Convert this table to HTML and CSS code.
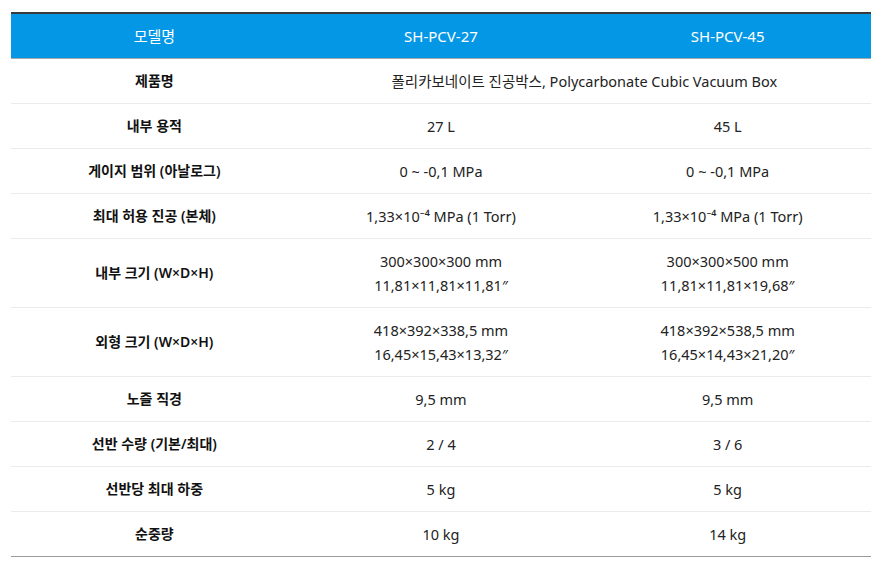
FILE: index.html
```html
<!DOCTYPE html>
<html lang="ko">
<head>
<meta charset="utf-8">
<title>Spec</title>
<link rel="stylesheet" href="styles.css">
</head>
<body>
<table class="spec">
  <colgroup><col class="c1"><col class="c2"><col class="c3"></colgroup>
  <thead>
    <tr><th>모델명</th><th>SH-PCV-27</th><th>SH-PCV-45</th></tr>
  </thead>
  <tbody>
    <tr><td class="lbl">제품명</td><td colspan="2">폴리카보네이트 진공박스, Polycarbonate Cubic Vacuum Box</td></tr>
    <tr><td class="lbl">내부 용적</td><td>27 L</td><td>45 L</td></tr>
    <tr><td class="lbl">게이지 범위 (아날로그)</td><td>0 ~ -0,1 MPa</td><td>0 ~ -0,1 MPa</td></tr>
    <tr><td class="lbl">최대 허용 진공 (본체)</td><td>1,33×10⁻⁴ MPa (1 Torr)</td><td>1,33×10⁻⁴ MPa (1 Torr)</td></tr>
    <tr><td class="lbl">내부 크기 (W×D×H)</td><td>300×300×300 mm<br>11,81×11,81×11,81″</td><td>300×300×500 mm<br>11,81×11,81×19,68″</td></tr>
    <tr><td class="lbl">외형 크기 (W×D×H)</td><td>418×392×338,5 mm<br>16,45×15,43×13,32″</td><td>418×392×538,5 mm<br>16,45×14,43×21,20″</td></tr>
    <tr><td class="lbl">노즐 직경</td><td>9,5 mm</td><td>9,5 mm</td></tr>
    <tr><td class="lbl">선반 수량 (기본/최대)</td><td>2 / 4</td><td>3 / 6</td></tr>
    <tr><td class="lbl">선반당 최대 하중</td><td>5 kg</td><td>5 kg</td></tr>
    <tr><td class="lbl">순중량</td><td>10 kg</td><td>14 kg</td></tr>
  </tbody>
</table>
</body>
</html>
```

FILE: styles.css
```css
html, body {
  margin: 0;
  padding: 0;
  background: #fff;
}
body {
  padding: 12px 12px 0 11px;
  font-family: "Noto Sans", "Noto Sans CJK KR", sans-serif;
  font-size: 14px;
  color: #222;
}
.spec {
  width: 860px;
  border-collapse: collapse;
  table-layout: fixed;
  border-top: 2px solid #3a3a3a;
  border-bottom: 1px solid #9a9a9a;
}
.spec col { width: 33.333%; }
.spec th {
  background: #0497e6;
  color: #fff;
  font-weight: 400;
  font-size: 15px;
  height: 44px;
  padding: 0;
  line-height: 24px;
  border-bottom: 1px solid #a8a8a8;
  text-align: center;
  vertical-align: middle;
}
.spec td {
  padding: 10px 0;
  line-height: 24px;
  font-size: 14.5px;
  text-align: center;
  vertical-align: middle;
  border-bottom: 1px solid #ebebeb;
}
.spec tbody tr:last-child td { border-bottom: 1px solid #9a9a9a; }
.spec td.lbl {
  font-size: 14px;
  font-weight: 600;
  color: #111;
}
```
